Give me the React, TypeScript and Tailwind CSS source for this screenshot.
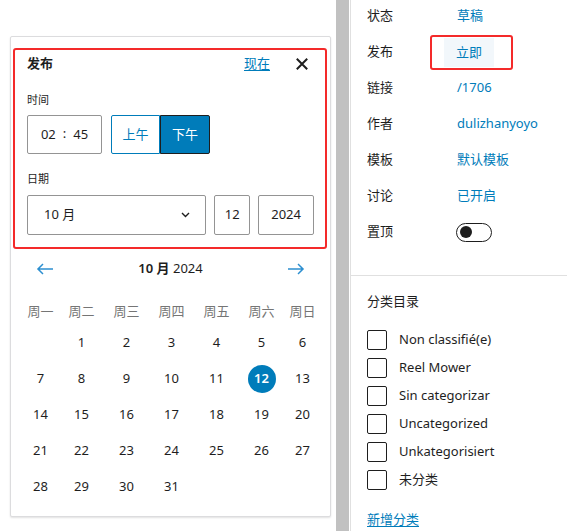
import React from 'react';

const weekdays = ['周一', '周二', '周三', '周四', '周五', '周六', '周日'];

const days: (number | null)[] = [null, ...Array.from({ length: 31 }, (_, i) => i + 1)];

const meta = [
  { label: '状态', value: '草稿' },
  { label: '发布', value: '立即' },
  { label: '链接', value: '/1706' },
  { label: '作者', value: 'dulizhanyoyo' },
  { label: '模板', value: '默认模板' },
  { label: '讨论', value: '已开启' },
];

const categories = ['Non classifié(e)', 'Reel Mower', 'Sin categorizar', 'Uncategorized', 'Unkategorisiert', '未分类'];

function PublishCard() {
  return (
    <div className="relative w-[321px] rounded-[2px] border border-[#dcdcde] bg-white px-[16px] pt-[16px] pb-[11px] shadow-[0_1px_2px_rgba(0,0,0,0.12)]">
      {/* annotation */}
      <div className="pointer-events-none absolute top-[11px] left-[2px] h-[201px] w-[314px] rounded-[3px] border-2 border-[#f42a2a]" />

      <div className="flex h-[22px] items-center justify-between">
        <span className="font-semibold text-[13px]">发布</span>
        <div className="flex items-center">
          <span className="text-[13px] text-[#007cba] underline underline-offset-2">现在</span>
          <button className="ml-[20px] flex h-[24px] w-[24px] items-center justify-center">
            <svg width="24" height="24" viewBox="0 0 24 24" fill="none" stroke="#1e1e1e" strokeWidth="2">
              <path d="M6.8 6.8l10.4 10.4M17.2 6.8L6.8 17.2" />
            </svg>
          </button>
        </div>
      </div>

      <div className="mt-[17px] text-[11px] leading-[16px]">时间</div>
      <div className="mt-[7px] flex h-[39px]">
        <div className="flex w-[75px] items-center justify-center gap-[7px] rounded-[2px] border border-[#949494] text-[13px]">
          <span>02</span>
          <span className="-mt-[2px]">:</span>
          <span>45</span>
        </div>
        <div className="ml-[9px] flex text-[13px]">
          <button className="w-[49px] rounded-l-[2px] border border-[#007cba] text-[#007cba]">上午</button>
          <button className="w-[50px] rounded-r-[2px] border border-[#1e1e1e] bg-[#007cba] text-white">下午</button>
        </div>
      </div>

      <div className="mt-[17px] text-[11px] leading-[16px]">日期</div>
      <div className="mt-[8px] flex h-[40px] text-[13px]">
        <div className="flex w-[180px] items-center justify-between rounded-[2px] border border-[#949494] pr-[15px] pl-[16px]">
          <span>10 月</span>
          <svg width="9" height="6" viewBox="0 0 9 6" fill="none" stroke="#1e1e1e" strokeWidth="1.4">
            <path d="M1 1l3.5 3.5L8 1" />
          </svg>
        </div>
        <div className="ml-[8px] flex w-[36px] items-center justify-center rounded-[2px] border border-[#949494]">12</div>
        <div className="ml-[8px] flex w-[56px] items-center justify-center rounded-[2px] border border-[#949494]">2024</div>
      </div>

      {/* calendar */}
      <div className="mt-[16px] flex h-[36px] items-center justify-between px-[6px]">
        <svg width="24" height="24" viewBox="0 0 24 24" fill="#2c8fd0">
          <path d="M20 11.2H6.8l3.7-3.7-1-1L3.9 12l5.6 5.5 1-1-3.7-3.7H20z" />
        </svg>
        <div className="text-[13px]">
          <span className="font-semibold">10 月</span> 2024
        </div>
        <svg width="24" height="24" viewBox="0 0 24 24" fill="#2c8fd0">
          <path d="m14.5 6.5-1 1 3.7 3.7H4v1.6h13.2l-3.7 3.7 1 1 5.6-5.5z" />
        </svg>
      </div>

      <div className="mt-[12px] -ml-[5px] grid h-[26px] grid-cols-[37px_45px_45px_45px_45px_45px_37px] items-center text-center text-[13px] text-[#757575]">
        {weekdays.map((w) => (
          <span key={w}>{w}</span>
        ))}
      </div>
      <div className="-ml-[5px] grid grid-cols-[37px_45px_45px_45px_45px_45px_37px] text-[13px]">
        {days.map((d, i) => (
          <div key={i} className="flex h-[36px] items-center justify-center">
            {d === 12 ? (
              <span className="flex h-[28px] w-[28px] items-center justify-center rounded-full bg-[#007cba] font-semibold text-white">
                12
              </span>
            ) : (
              <span>{d ?? ''}</span>
            )}
          </div>
        ))}
      </div>
    </div>
  );
}

function SidePanel() {
  return (
    <div className="flex-1 border-l border-[#e0e0e0] text-[13px]">
      <div className="border-b border-[#e0e0e0] pb-[25px] pl-[16px]">
        <div className="-mt-[2px]">
          {meta.map((m) => (
            <div key={m.label} className="flex h-[36px] items-center">
              <span className="w-[90px] shrink-0">{m.label}</span>
              {m.label === '发布' ? (
                <span className="relative -ml-[13px] bg-[#f2f7fb] px-[12px] py-[6px] leading-[17px] text-[#007cba]">
                  {m.value}
                  <span className="pointer-events-none absolute -top-[3px] -right-[19px] -bottom-[3px] -left-[14px] rounded-[3px] border-2 border-[#f42a2a]" />
                </span>
              ) : (
                <span className="text-[#007cba]">{m.value}</span>
              )}
            </div>
          ))}
          <div className="flex h-[36px] items-center">
            <span className="w-[89px] shrink-0">置顶</span>
            <div className="flex h-[19px] w-[36px] items-center rounded-full border border-[#1e1e1e]">
              <span className="ml-[3px] h-[12px] w-[12px] rounded-full bg-[#1e1e1e]" />
            </div>
          </div>
        </div>
      </div>
      <div className="pt-[15px] pl-[16px]">
        <div className="leading-[20px]">分类目录</div>
        <div className="mt-[15px]">
          {categories.map((c) => (
            <label key={c} className="flex h-[28px] items-center gap-[12px]">
              <span className="h-[20px] w-[20px] rounded-[2px] border border-[#1e1e1e]" />
              <span>{c}</span>
            </label>
          ))}
        </div>
        <div className="mt-[15px] leading-[20px] text-[#007cba] underline underline-offset-2">新增分类</div>
      </div>
    </div>
  );
}

export default function App() {
  return (
    <div className="flex h-[531px] w-[567px] overflow-hidden bg-white font-['Segoe_UI','Noto_Sans','Noto_Sans_CJK_SC',sans-serif] text-[#1e1e1e]">
      <div className="w-[336px] shrink-0 pt-[36px] pl-[10px]">
        <PublishCard />
      </div>
      <div className="mr-[1px] w-[13px] shrink-0 bg-[#c1c1c1]" />
      <SidePanel />
    </div>
  );
}
